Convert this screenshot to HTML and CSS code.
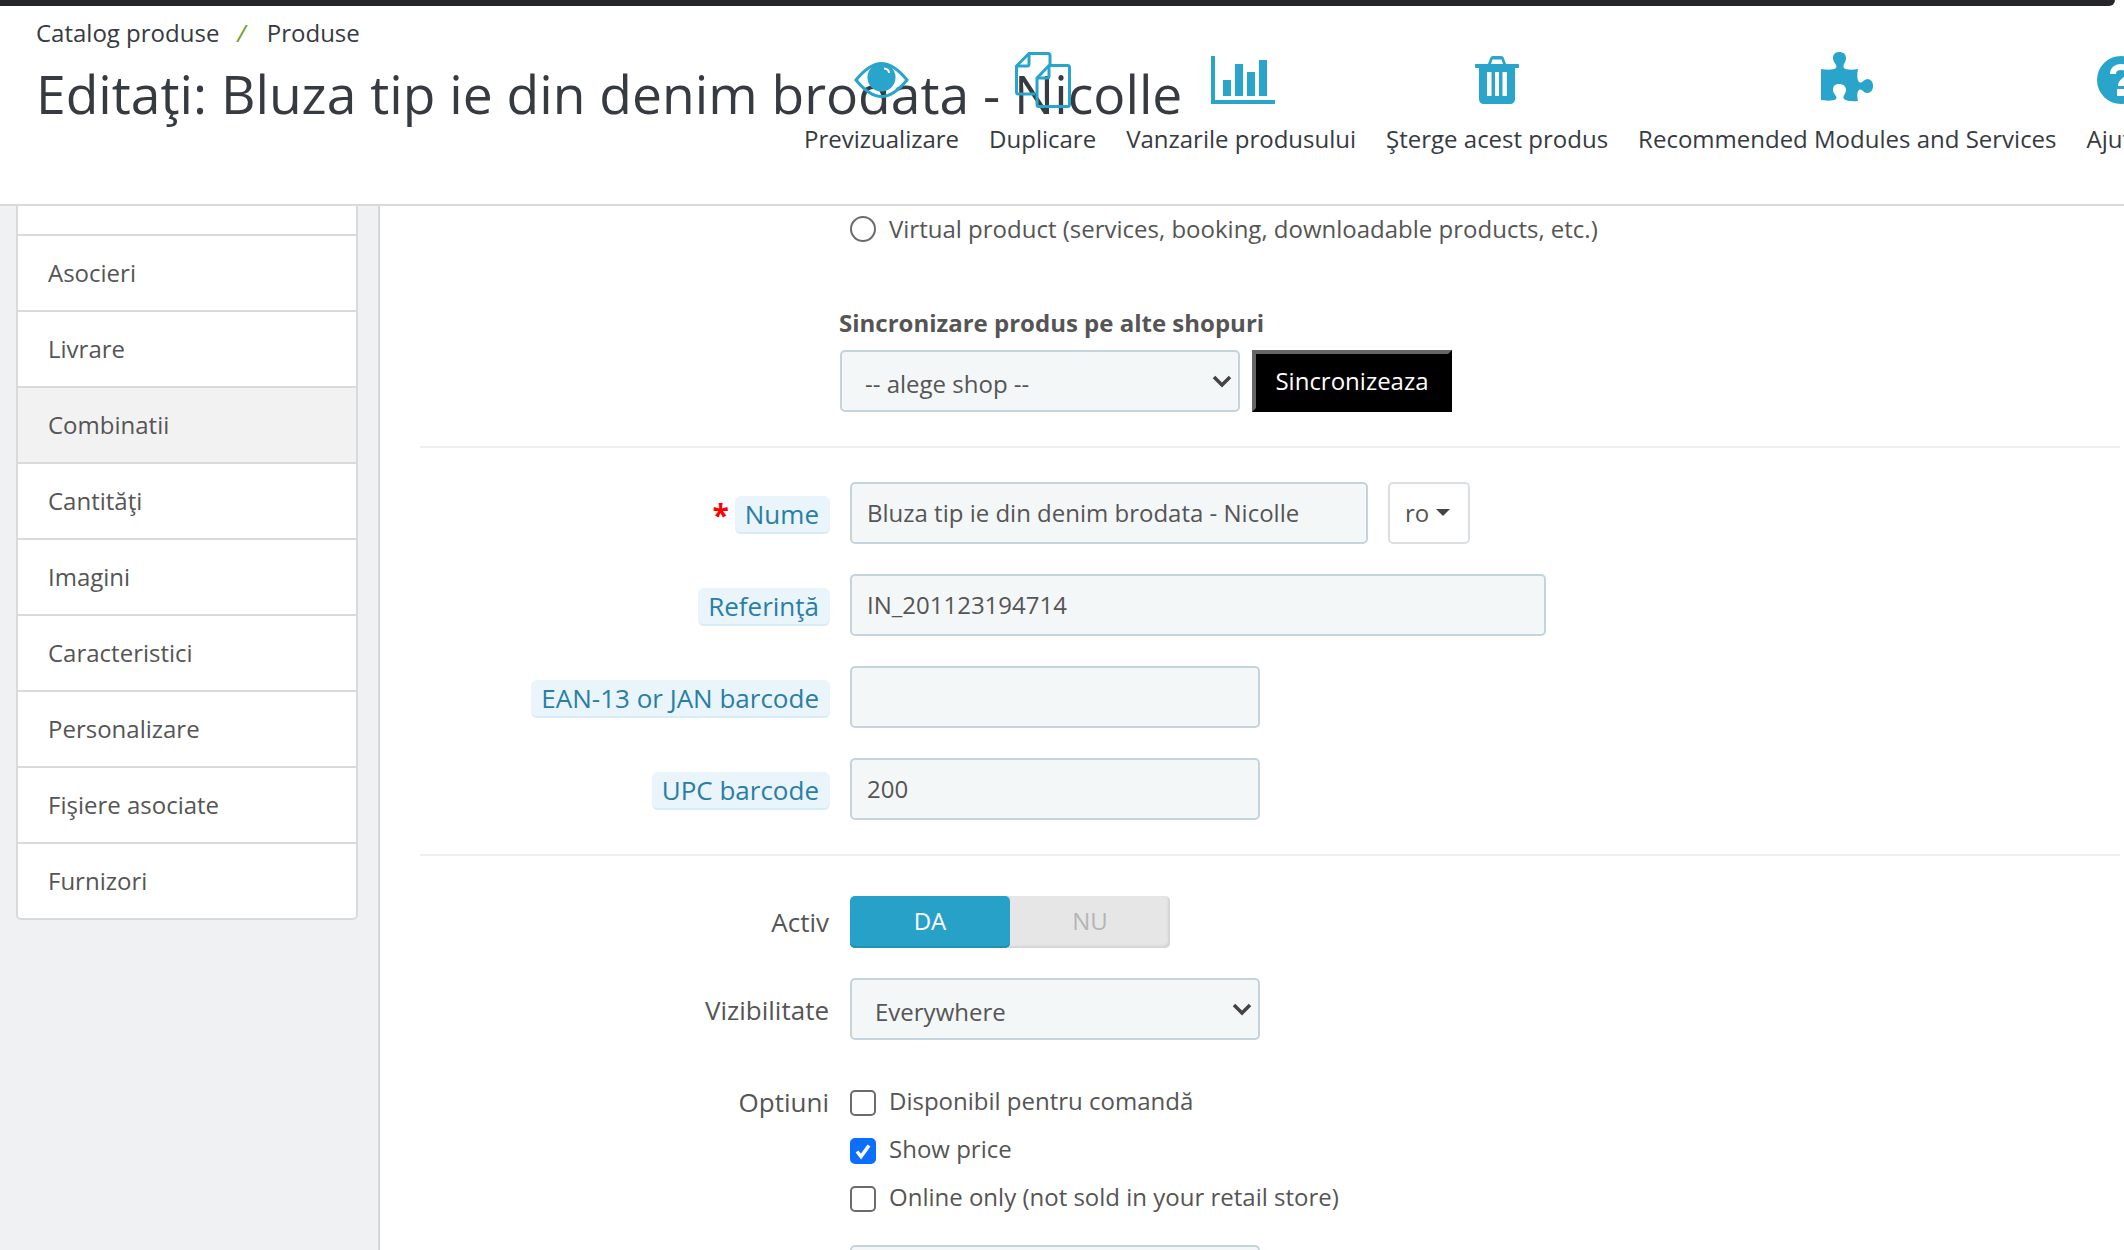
FILE: index.html
```html
<!DOCTYPE html>
<html>
<head>
    <title>Editaţi: Bluza tip ie din denim brodata - Nicolle</title>
    <link rel="stylesheet" href="styles.css">
</head>
<body>
    <div class="topbar"></div>
    <header class="page-head">
        <div class="head-text">
            <div class="breadcrumb"><span>Catalog produse</span><i>/</i><span>Produse</span></div>
            <h1>Editaţi: Bluza tip ie din denim brodata - Nicolle</h1>
        </div>
        <nav class="toolbar">
            <a class="tool">
                <span class="tool-icon">
                    <svg width="55" height="36" viewBox="0 0 55 36">
                        <path class="line" d="M2 18C11 7 19 1.500 27.500 1.500S44 7 53 18C44 29 36 34.500 27.500 34.500S11 29 2 18Z"/>
                        <circle class="solid" cx="27.500" cy="15.500" r="14"/>
                        <path d="M30 6.500C33 6.500 35 8.500 35 11" fill="none" stroke="#fff" stroke-width="2"/>
                    </svg>
                </span>
                Previzualizare
            </a>
            <a class="tool">
                <span class="tool-icon">
                    <svg width="56" height="56" viewBox="0 0 56 56">
                        <path class="line" d="M20 42H3.500a2 2 0 0 1-2-2V14L14 1.500H33a2 2 0 0 1 2 2V12"/>
                        <path class="line" d="M14 1.500V12a2 2 0 0 1-2 2H1.500"/>
                        <path class="line" d="M34 13.500H52.500a2 2 0 0 1 2 2V52.500a2 2 0 0 1-2 2H24a2 2 0 0 1-2-2V26Z"/>
                        <path class="line" d="M34 13.500V24a2 2 0 0 1-2 2H22"/>
                    </svg>
                </span>
                Duplicare
            </a>
            <a class="tool">
                <span class="tool-icon icon-bars">
                    <svg width="64" height="48" viewBox="0 0 64 48">
                        <path class="solid" d="M0 0H4V44H64V48H0ZM12 24H20V40H12ZM24 8H32V40H24ZM36 16H44V40H36ZM48 4H56V40H48Z"/>
                    </svg>
                </span>
                Vanzarile produsului
            </a>
            <a class="tool">
                <span class="tool-icon">
                    <svg width="44" height="48" viewBox="0 0 44 48">
                        <path class="solid" fill-rule="evenodd" d="M13 8L15 2.500C15.500 1 16.500 0 18 0H26C27.500 0 28.500 1 29 2.500L31 8H43C43.600 8 44 8.400 44 9V11C44 11.600 43.600 12 43 12H40V43C40 46 38 48 35 48H9C6 48 4 46 4 43V12H1C.4 12 0 11.600 0 11V9C0 8.400 .4 8 1 8ZM16 8H28L26.500 3.500H17.500ZM12 16V40H16.500V16ZM20 16V40H24V16ZM27.500 16V40H32V16Z"/>
                    </svg>
                </span>
                Şterge acest produs
            </a>
            <a class="tool">
                <span class="tool-icon">
                    <svg width="52" height="56" viewBox="0 0 52 56">
                        <path class="solid" d="M0 17C5 18 13 18 15 16C17 13 12 11 12 6C12 2 15 0 18 0C22 0 25 2 25 6C25 11 21 13 23 16C25 18 31 18 37 17C36 22 36 28 38 30C41 32 42 28 46 27C50 27 52 30 52 34C52 38 50 41 46 41C42 41 41 36 38 38C36 40 36 44 37 49C31 49.500 25 49 23 47C21 44 25 42 25 38C25 34 22 32 18 32C14 32 12 34 12 38C12 42 17 44 15 47C13 49 5 49 0 48Z"/>
                    </svg>
                </span>
                Recommended Modules and Services
            </a>
            <a class="tool">
                <span class="tool-icon">
                    <svg width="48" height="48" viewBox="0 0 48 48">
                        <circle class="solid" cx="24" cy="24" r="24"/>
                        <path d="M16 18C16 13 20 11 24 11C28 11 32 13 32 18C32 24 24 24 24 30" fill="none" stroke="#fff" stroke-width="6"/>
                        <rect x="20" y="33" width="8" height="7" fill="#fff"/>
                    </svg>
                </span>
                Ajutor
            </a>
        </nav>
    </header>

    <main class="page-body">
        <aside class="side">
            <ul class="tabs">
                <li>SEO</li>
                <li>Asocieri</li>
                <li>Livrare</li>
                <li class="active">Combinatii</li>
                <li>Cantităţi</li>
                <li>Imagini</li>
                <li>Caracteristici</li>
                <li>Personalizare</li>
                <li>Fişiere asociate</li>
                <li>Furnizori</li>
            </ul>
        </aside>

        <section class="content">
            <label class="check-row radio-row"><input type="radio" name="type">Virtual product (services, booking, downloadable products, etc.)</label>

            <div class="sync">
                <strong>Sincronizare produs pe alte shopuri</strong>
                <div class="sync-row">
                    <select class="sync-select"><option>-- alege shop --</option></select>
                    <button class="sync-btn">Sincronizeaza</button>
                </div>
            </div>

            <hr>

            <div class="form-group">
                <div class="row">
                    <label class="field-label"><em>*</em><span class="chip">Nume</span></label>
                    <div class="field-line">
                        <input class="input w-name" type="text" value="Bluza tip ie din denim brodata - Nicolle">
                        <button class="lang">ro<i></i></button>
                    </div>
                </div>
                <div class="row">
                    <label class="field-label"><span class="chip">Referinţă</span></label>
                    <input class="input w-wide" type="text" value="IN_201123194714">
                </div>
                <div class="row">
                    <label class="field-label"><span class="chip">EAN-13 or JAN barcode</span></label>
                    <input class="input w-small" type="text">
                </div>
                <div class="row">
                    <label class="field-label"><span class="chip">UPC barcode</span></label>
                    <input class="input w-small" type="text" value="200">
                </div>
            </div>

            <hr>

            <div class="row row-switch">
                <label class="field-label plain">Activ</label>
                <div class="switch"><span class="on">DA</span><span class="off">NU</span></div>
            </div>
            <div class="row row-vis">
                <label class="field-label plain">Vizibilitate</label>
                <select class="input vis-select"><option>Everywhere</option></select>
            </div>
            <div class="row row-options">
                <label class="field-label plain">Optiuni</label>
                <div class="checks">
                    <label class="check-row"><input type="checkbox">Disponibil pentru comandă</label>
                    <label class="check-row"><input type="checkbox" checked>Show price</label>
                    <label class="check-row"><input type="checkbox">Online only (not sold in your retail store)</label>
                </div>
            </div>
            <div class="row row-last">
                <span></span>
                <input class="input w-small" type="text">
            </div>
        </section>
    </main>
</body>
</html>
```

FILE: styles.css
```css
html, body {
    margin: 0;
    height: 1250px;
    overflow: hidden;
}

body {
    font-family: "Open Sans", sans-serif;
    font-size: 24px;
    color: #555;
    background-color: #fff;
}

.topbar {
    height: 6px;
    width: 2115px;
    background-color: #25262b;
    border-bottom-right-radius: 6px;
}

/* title and toolbar share one cell, the toolbar runs over the title */
.page-head {
    position: relative;
    z-index: 1;
    display: grid;
    height: 198px;
    background-color: #fff;
    border-bottom: 2px solid #d9dadb;
    overflow: hidden;
}

.head-text,
.toolbar {
    grid-area: 1 / 1;
}

.head-text {
    padding: 8px 0 0 36px;
}

.breadcrumb {
    line-height: 38px;
    color: #363a41;
    white-space: nowrap;
}

.breadcrumb i {
    margin: 0 21px 0 18px;
    color: #6c9e2b;
}

h1 {
    margin: 5px 0 0;
    font-size: 53.400px;
    font-weight: 400;
    line-height: 74px;
    color: #363a41;
    white-space: nowrap;
}

.toolbar {
    display: flex;
    gap: 30px;
    padding: 44px 0 0 804px;
    white-space: nowrap;
}

.tool {
    display: flex;
    flex-direction: column;
    align-items: center;
    line-height: 34px;
    color: #363a41;
}

.tool-icon {
    display: flex;
    align-items: center;
    height: 60px;
    margin-bottom: 12px;
}

.icon-bars {
    margin-left: 3px;
}

.solid {
    fill: #29a4cb;
}

.line {
    fill: none;
    stroke: #29a4cb;
    stroke-width: 3;
}

.page-body {
    display: flex;
    height: 1044px;
}

.side {
    width: 378px;
    flex-shrink: 0;
    background-color: #eff1f2;
    border-right: 2px solid #d3d6d9;
}

.tabs {
    margin: -48px 0 0 16px;
    padding: 0;
    width: 342px;
    box-sizing: border-box;
    list-style: none;
    background-color: #fff;
    border: 2px solid #d9dadb;
    border-radius: 5px;
}

.tabs li {
    height: 76px;
    box-sizing: border-box;
    padding-left: 30px;
    line-height: 74px;
    border-bottom: 2px solid #d9dadb;
}

.tabs li:last-child {
    height: 74px;
    border-bottom: none;
}

.tabs li.active {
    background-color: #f2f2f2;
}

.content {
    flex: 1;
    padding: 8px 4px 0 40px;
}

hr {
    margin: 0;
    height: 2px;
    border: none;
    background-color: #eeeeee;
}

.check-row {
    display: flex;
    align-items: flex-start;
    gap: 13px;
    height: 30px;
    line-height: 26px;
    white-space: nowrap;
}

.check-row input {
    flex-shrink: 0;
    appearance: none;
    width: 26px;
    height: 26px;
    margin: 2px 0 0;
    background: #fff;
    border: 2px solid #6b6b6b;
    border-radius: 5px;
}

.check-row input[type="radio"] {
    border-radius: 50%;
}

.check-row input:checked {
    background: #0b6ffb url("data:image/svg+xml,%3Csvg xmlns='http://www.w3.org/2000/svg' viewBox='0 0 26 26'%3E%3Cpath d='M7 13.500l4 5 8-11' fill='none' stroke='%23fff' stroke-width='3.500'/%3E%3C/svg%3E") center / 26px no-repeat;
    border-color: #0b6ffb;
}

.radio-row {
    margin-left: 430px;
    line-height: 30px;
}

.sync {
    margin: 62px 0 34px 420px;
}

.sync strong {
    display: block;
    margin-left: -1px;
    line-height: 34px;
    margin-bottom: 10px;
}

.sync-row {
    display: flex;
    gap: 12px;
}

select {
    appearance: none;
    font-family: inherit;
    font-size: 24px;
    color: #555;
    background: #f4f7f8 url("data:image/svg+xml,%3Csvg xmlns='http://www.w3.org/2000/svg' viewBox='0 0 20 14'%3E%3Cpath d='M2 3l8 8 8-8' fill='none' stroke='%23444' stroke-width='3.500'/%3E%3C/svg%3E") right 6px top 22px / 20px 14px no-repeat;
    border: 2px solid #c5d4dc;
    border-radius: 5px;
}

.sync-select {
    width: 400px;
    height: 62px;
    padding: 4px 0 0 23px;
}

.sync-btn {
    width: 200px;
    height: 62px;
    padding: 0 0 2px;
    font-family: inherit;
    font-size: 24px;
    color: #fff;
    background-color: #000;
    border: 4px outset #666;
    border-color: #666 #1a1a1a #1a1a1a #666;
}

.form-group {
    padding: 34px 0 34px;
}

.row {
    display: grid;
    grid-template-columns: 410px 1fr;
    column-gap: 20px;
    align-items: center;
}

.form-group .row + .row {
    margin-top: 30px;
}

.field-label {
    display: flex;
    justify-content: flex-end;
    align-items: center;
    gap: 6px;
    font-size: 26px;
    line-height: 36px;
    padding-top: 4px;
}

.field-label.plain {
    margin-right: 1px;
    padding-top: 2px;
}

.row-switch .field-label {
    padding-top: 0;
}

.row-options .field-label {
    padding-top: 0;
    line-height: 28px;
}

.field-label em {
    font-style: normal;
    font-weight: 700;
    font-size: 30px;
    color: #f00;
}

.chip {
    padding: 0 11px 0 10px;
    color: #2a7ea6;
    background-color: #e9f5fb;
    border-bottom: 2px solid #d8ecf5;
    border-radius: 6px;
}

.input {
    box-sizing: border-box;
    height: 62px;
    padding: 0 15px 2px;
    font-family: inherit;
    font-size: 24px;
    color: #555;
    background-color: #f4f7f8;
    border: 2px solid #c5d4dc;
    border-radius: 5px;
}

.w-name {
    width: 518px;
}

.w-wide {
    width: 696px;
}

.w-small {
    width: 410px;
}

.field-line {
    display: flex;
    gap: 20px;
}

.lang {
    display: flex;
    align-items: center;
    gap: 7px;
    width: 82px;
    height: 62px;
    padding: 0 0 2px 15px;
    font-family: inherit;
    font-size: 24px;
    color: #555;
    background-color: #fff;
    border: 2px solid #dcdfe2;
    border-radius: 5px;
}

.lang i {
    width: 0;
    height: 0;
    border-top: 7px solid #444;
    border-left: 7px solid transparent;
    border-right: 7px solid transparent;
}

.row-switch {
    margin-top: 40px;
}

.switch {
    display: flex;
    width: 320px;
    height: 52px;
    line-height: 50px;
    text-align: center;
    background-color: #e6e6e6;
    border-radius: 5px;
    box-shadow: inset -2px -2px 2px #d4d4d4;
}

.switch span {
    flex: 1;
}

.switch .on {
    color: #fff;
    background-color: #27a1c8;
    border-radius: 5px;
    box-shadow: inset 0 -2px 0 #2090b5;
}

.switch .off {
    color: #b5b5b5;
}

.row-vis {
    margin-top: 30px;
}

.vis-select {
    width: 410px;
    padding: 4px 0 0 23px;
}

.row-options {
    align-items: start;
    margin-top: 48px;
}

.checks {
    display: flex;
    flex-direction: column;
    gap: 18px;
}

.row-last {
    margin-top: 31px;
}
```
